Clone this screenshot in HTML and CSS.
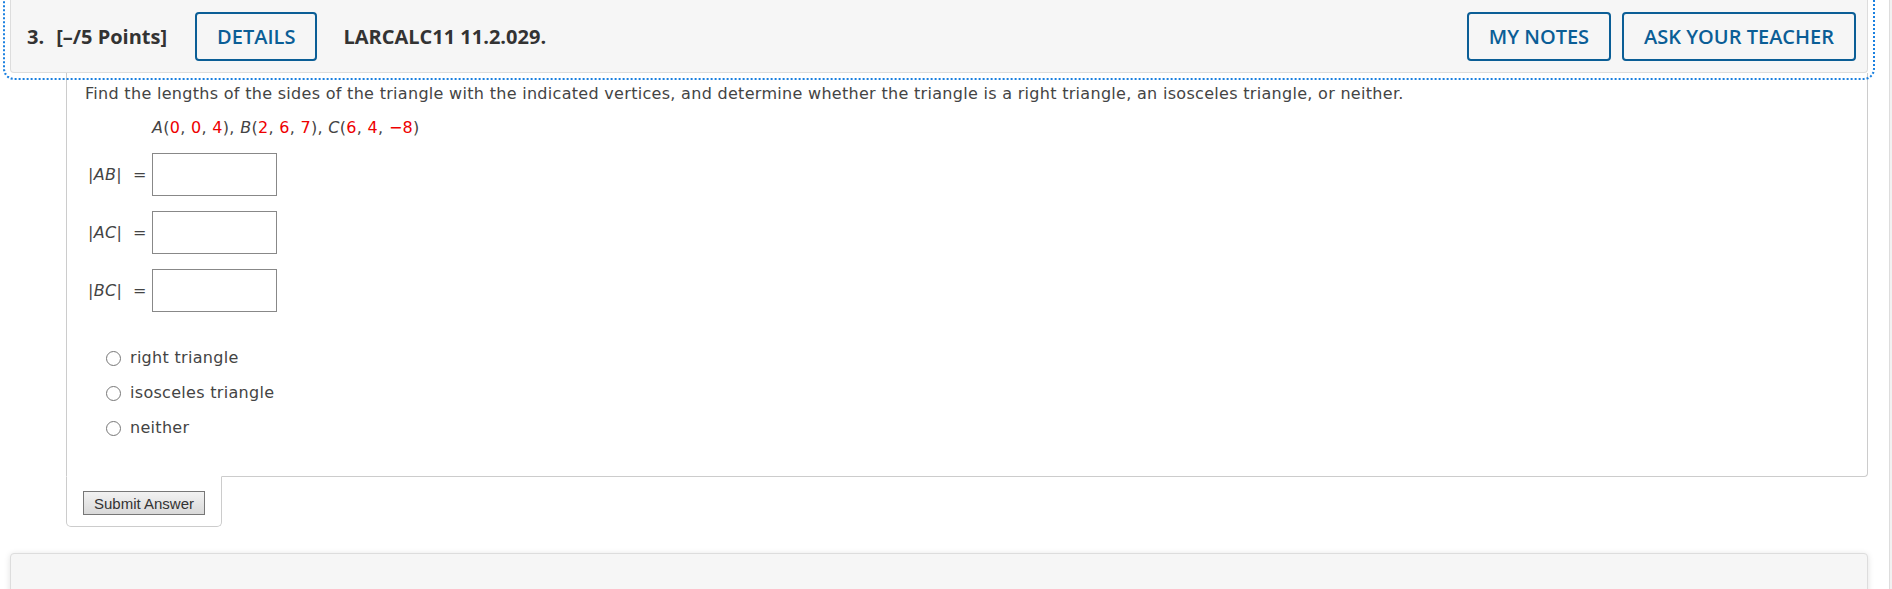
FILE: index.html
```html
<!DOCTYPE html>
<html lang="en">
<head>
    <meta charset="UTF-8">
    <meta name="viewport" content="width=device-width, initial-scale=1.0">
    <title>LARCALC11 11.2.029</title>
    <link rel="stylesheet" href="styles.css">
</head>
<body>
    <div class="page">
        <div class="question">
            <div class="question-header" tabindex="0">
                <span class="qnum">3.</span>
                <span class="points">[&ndash;/5 Points]</span>
                <button class="btn-outline details-btn">DETAILS</button>
                <span class="ref">LARCALC11 11.2.029.</span>
                <div class="header-actions">
                    <button class="btn-outline">MY NOTES</button>
                    <button class="btn-outline">ASK YOUR TEACHER</button>
                </div>
            </div>

            <div class="question-body">
                <p class="prompt">Find the lengths of the sides of the triangle with the indicated vertices, and determine whether the triangle is a right triangle, an isosceles triangle, or neither.</p>
                <p class="vertices">
                    <i>A</i>(<span class="num">0</span>, <span class="num">0</span>, <span class="num">4</span>),
                    <i>B</i>(<span class="num">2</span>, <span class="num">6</span>, <span class="num">7</span>),
                    <i>C</i>(<span class="num">6</span>, <span class="num">4</span>, <span class="num">&minus;8</span>)
                </p>

                <div class="answer-row">
                    <span class="side">|<i>AB</i>|</span>
                    <span class="eq">=</span>
                    <input type="text" class="answer-box">
                </div>
                <div class="answer-row">
                    <span class="side">|<i>AC</i>|</span>
                    <span class="eq">=</span>
                    <input type="text" class="answer-box">
                </div>
                <div class="answer-row">
                    <span class="side">|<i>BC</i>|</span>
                    <span class="eq">=</span>
                    <input type="text" class="answer-box">
                </div>

                <div class="choices">
                    <label class="choice"><input type="radio" name="kind"> right triangle</label>
                    <label class="choice"><input type="radio" name="kind"> isosceles triangle</label>
                    <label class="choice"><input type="radio" name="kind"> neither</label>
                </div>
            </div>

            <div class="submit-tab">
                <button class="submit-btn">Submit Answer</button>
            </div>
        </div>

        <div class="next-question"></div>
    </div>
    <div class="scroll-strip"></div>
</body>
</html>
```

FILE: styles.css
```css
* {
    box-sizing: border-box;
}

html, body {
    margin: 0;
    padding: 0;
    height: 100%;
}

body {
    display: flex;
    background: #fff;
    color: #333;
    overflow: hidden;
}

.page {
    flex: 1;
    padding: 0 21px 0 10px;
}

.scroll-strip {
    width: 3px;
    border-left: 1px solid #ddd;
    background: #f1f1f1;
}

/* header bar */
.question-header {
    display: flex;
    align-items: center;
    height: 73px;
    padding: 0 11px 0 16px;
    background: #f6f6f6;
    border: 1px solid #ddd;
    border-top: 0;
    border-radius: 0 0 4px 4px;
    font-family: "Open Sans", sans-serif;
    outline: 2px dotted #1a80e0;
    outline-offset: 5px;
}

.qnum, .points, .ref {
    font-size: 20px;
    font-weight: 700;
    color: #333;
}

.points {
    margin-left: 12px;
}

.ref {
    margin-left: 26px;
}

.btn-outline {
    height: 49px;
    padding: 0 20px;
    background: #f6f6f6;
    border: 2px solid #0b5e96;
    border-radius: 4px;
    color: #0b5e96;
    font-family: "Open Sans", sans-serif;
    font-size: 20px;
    font-weight: 600;
    cursor: pointer;
}

.details-btn {
    margin-left: 28px;
}

.header-actions {
    margin-left: auto;
    display: flex;
    gap: 11px;
}

/* question content */
.question-body {
    margin-left: 56px;
    padding: 11px 18px 38px;
    border: 1px solid #ccc;
    border-top: 0;
    border-radius: 0 0 4px 0;
    font-family: "DejaVu Sans", Verdana, sans-serif;
    font-size: 16px;
    letter-spacing: 0.3px;
    line-height: 20px;
    color: #444;
}

.prompt {
    margin: 0;
}

.vertices {
    margin: 14px 0 15px 67px;
}

.num {
    color: #e00;
}

.answer-row {
    display: flex;
    align-items: center;
    margin: 0 0 15px 3px;
}

.side {
    width: 45px;
}

.eq {
    width: 19px;
}

.answer-box {
    width: 125px;
    height: 43px;
    border: 1px solid #888;
    border-radius: 0;
    margin: 0;
}

.choices {
    margin-top: 36px;
    padding-left: 21px;
    display: flex;
    flex-direction: column;
    gap: 15px;
}

.choice {
    display: flex;
    align-items: center;
    gap: 9px;
    height: 20px;
}

.choice input {
    appearance: none;
    width: 15px;
    height: 15px;
    margin: 0;
    border: 1.5px solid #777;
    border-radius: 50%;
    background: #fff;
}

/* submit tab under the body */
.submit-tab {
    width: 156px;
    margin: -1px 0 0 56px;
    padding: 14px 0 11px 16px;
    background: #fff;
    border: 1px solid #ccc;
    border-top: 1px solid #fff;
    border-radius: 0 0 5px 5px;
}

.submit-btn {
    display: block;
    width: 122px;
    height: 24px;
    padding: 0;
    border: 1px solid #777;
    background: linear-gradient(#f2f2f2, #d9d9d9);
    color: #333;
    font-family: "Liberation Sans", Arial, sans-serif;
    font-size: 15px;
}

.next-question {
    margin-top: 26px;
    height: 120px;
    background: #f6f6f6;
    border: 1px solid #ddd;
    border-radius: 4px;
    box-shadow: 0 1px 6px rgba(0, 0, 0, 0.12);
}
```
